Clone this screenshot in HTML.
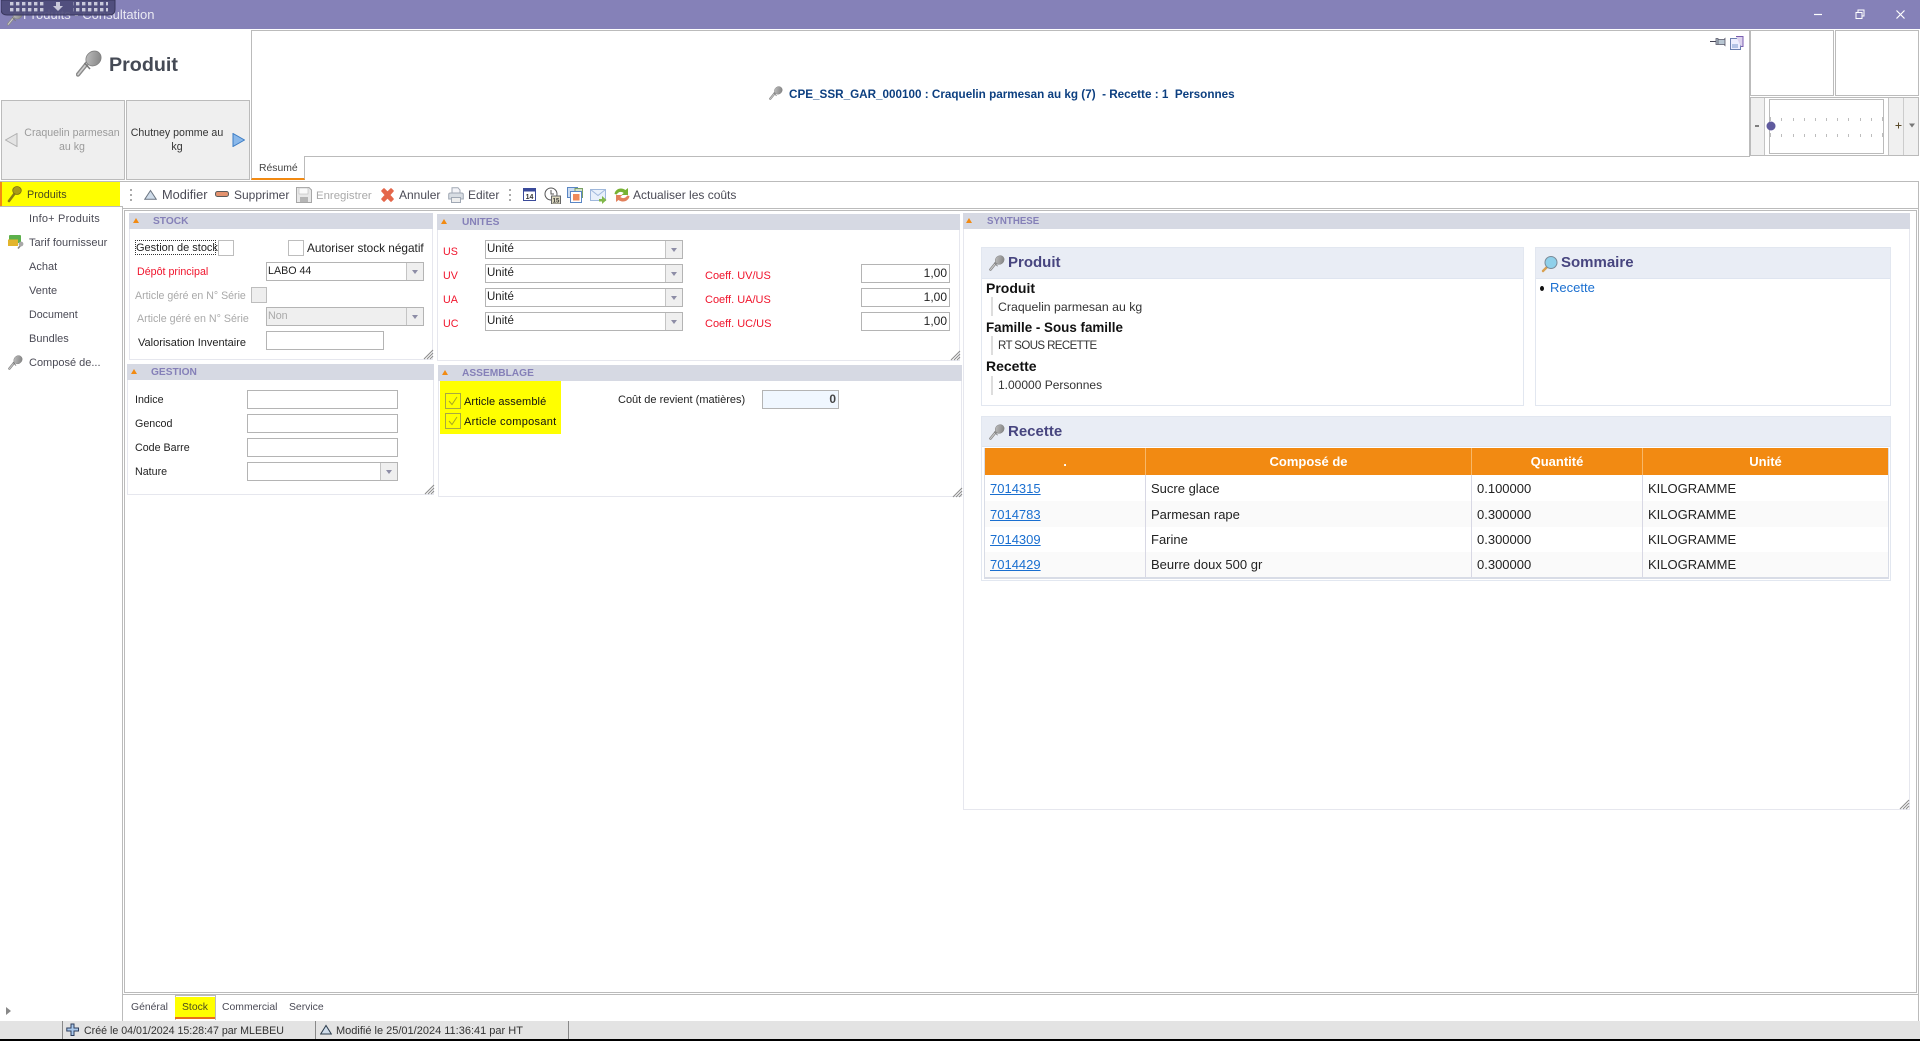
<!DOCTYPE html>
<html lang="fr"><head><meta charset="utf-8"><title>Produits - Consultation</title>
<style>
html,body{margin:0;padding:0;background:#fff}
#p{position:relative;width:1920px;height:1041px;overflow:hidden;background:#fff;font-family:"Liberation Sans",sans-serif;font-size:11px;color:#222}
#p div,#p svg,#p a{position:absolute;box-sizing:border-box}
.t{white-space:nowrap;line-height:16px;height:16px;margin-top:1px}
.m{color:#4a4a55}
.tb{font-size:12px;margin-top:0}
.z{margin-top:0}
.tab{font-size:10.4px}
.g{background:#bbb}
.h{background:#d6d9e3;height:16px}
.ht{font-weight:bold;color:#8580b8;font-size:10.2px;line-height:18px;white-space:nowrap}
.tri{width:0;height:0;border-left:3.5px solid transparent;border-right:3.5px solid transparent;border-bottom:5px solid #f28a12}
.b{border:1px solid #e6e7ee;background:#fff}
.i{border:1px solid #b4b4b4;background:#fff;height:19px;line-height:17px;padding-left:1px;white-space:nowrap;font-size:11.5px}
.r{text-align:right;padding:0 2px 0 0;font-size:12px;line-height:16px}
.c{position:absolute;right:0;top:0;bottom:0;width:17px;background:#efefef;border-left:1px solid #c4c4c4}
.c:after{content:"";position:absolute;left:5px;top:7px;border-left:3px solid transparent;border-right:3px solid transparent;border-top:4px solid #8d8da6}
.k{border:1px solid #bdbdbd;width:16px;height:16px}
.red{color:#f0142c}
.dis{color:#a9a9a9}
.lb{font-size:10.7px}
.bx{border:1px solid #e2e7f0;background:#fff}
.bh{background:#e9edf5;border-bottom:1px solid #dfe5f0;left:0;right:0;top:0}
.bt{font-weight:bold;font-size:15px;color:#47457f;line-height:18px;white-space:nowrap}
.sb{font-weight:bold;font-size:14px;color:#111;margin-top:0}
.sv{font-size:12.300px;color:#333;margin-top:0}
.vb{width:2px;background:#ddd;height:19px}
table{position:absolute;left:984px;top:448px;width:904px;border-collapse:collapse;table-layout:fixed;font-size:13px;color:#222;border-bottom:2px solid #d8dce6;border-left:1px solid #d8dce6;border-right:1px solid #d8dce6}
th{background:#f28a12;color:#fff;font-weight:bold;height:27px;padding:0;border-left:1px solid #f7b768;font-size:13px}
th:first-child,td:first-child{border-left:0}
td{padding:0 0 0 5px;border-left:1px solid #d8d8e4;white-space:nowrap}
tr.e td{background:#fafafa}
td a{color:#1a6fd0;text-decoration:underline;position:static!important}
</style></head><body><div id="p">
<svg width="0" height="0" style="left:0;top:0"><defs>
<linearGradient id="kg" x1="0" y1="0" x2="1" y2="1"><stop offset="0" stop-color="#c4c4c4"/><stop offset="1" stop-color="#7c7c7c"/></linearGradient>
<symbol id="key" viewBox="0 0 26 27"><path d="M2 24.5 L13 11" stroke="#8a8a8a" stroke-width="4.4" stroke-linecap="round" fill="none"/><path d="M2 24.5 L13 11" stroke="#cfcfcf" stroke-width="1.6" stroke-linecap="round" fill="none"/><ellipse cx="17.5" cy="8.5" rx="8" ry="7" transform="rotate(-40 17.5 8.5)" fill="url(#kg)" stroke="#808080" stroke-width=".8"/><path d="M8.5 13 L14 19" stroke="#777" stroke-width="1.5"/></symbol>
<symbol id="grip" viewBox="0 0 11 11"><path d="M1 10 L10 1 M4 10 L10 4 M7 10 L10 7" stroke="#8d8d8d" stroke-width="1.1" fill="none"/></symbol>
</defs></svg>

<!-- title bar -->
<div style="left:0;top:0;width:1920px;height:29px;background:#8581b8"></div>
<svg style="left:7px;top:9px" width="16" height="17"><use href="#key" width="16" height="17"/></svg>
<div class="t z" style="left:23px;top:7px;font-size:13px;color:#e9e9f2">Produits - Consultation</div>
<svg style="left:1px;top:0" width="115" height="16"><defs><pattern id="dp" width="6" height="6" patternUnits="userSpaceOnUse" x="9" y="2"><rect width="3.4" height="3.4" fill="#c9c9da"/></pattern></defs><path d="M0 0H114V9Q114 15 108 15H6Q0 15 0 9Z" fill="#4d4b78" fill-opacity=".92" stroke="#38365c"/><rect x="9" y="2" width="35" height="10" fill="url(#dp)"/><rect x="72" y="2" width="35" height="10" fill="url(#dp)"/><path d="M55 2h4v4h3l-5 5-5-5h3z" fill="#c9c9da"/></svg>
<svg style="left:1810px;top:6px" width="100" height="16"><path d="M4 8.500h8" stroke="#fff" stroke-width="1.200"/><path d="M46 6.500h6v6h-6z M48 6.500v-2.500h6v6h-2" stroke="#fff" stroke-width="1" fill="none"/><path d="M86.500 4.500l8 8M94.500 4.500l-8 8" stroke="#fff" stroke-width="1.200"/></svg>

<!-- logo -->
<svg style="left:76px;top:50px" width="26" height="27"><use href="#key" width="26" height="27"/></svg>
<div class="t z" style="left:109px;top:53px;font-size:19.700px;font-weight:bold;color:#454a55;line-height:24px;height:24px">Produit</div>

<!-- nav buttons -->
<div style="left:1px;top:100px;width:124px;height:80px;background:#efefef;border:1px solid #bbb"></div>
<div style="left:126px;top:100px;width:124px;height:80px;background:#efefef;border:1px solid #bbb"></div>
<div style="left:17px;top:126px;width:110px;text-align:center;line-height:14px;font-size:10.600px;color:#9b9b9b;white-space:nowrap">Craquelin parmesan<br>au kg</div>
<div style="left:122px;top:126px;width:110px;text-align:center;line-height:14px;font-size:10.600px;color:#333;white-space:nowrap">Chutney pomme au<br>kg</div>
<svg style="left:5px;top:133px" width="13" height="14"><path d="M12 .5V13.500L.5 7z" fill="#e4e4e4" stroke="#b0b0b0"/></svg>
<svg style="left:232px;top:133px" width="13" height="14"><path d="M1 .5V13.500L12.500 7z" fill="#8ab8ea" stroke="#3c7cc4"/></svg>

<!-- header -->
<div style="left:251px;top:30px;width:1499px;height:127px;border:1px solid #bbb;background:#fff"></div>
<svg style="left:769px;top:86px" width="14" height="14"><use href="#key" width="14" height="14"/></svg>
<div class="t" style="left:789px;top:86px;font-weight:bold;color:#0c3f80;font-size:11.700px">CPE_SSR_GAR_000100 : Craquelin parmesan au kg (7) &nbsp;- Recette : 1 &nbsp;Personnes</div>
<svg style="left:1710px;top:36px" width="36" height="14"><path d="M0 5.500h6" stroke="#445" stroke-width="1"/><path d="M6 2.500h2v6h-2zM8 3.500h6l1-1v7l-1-1H8z" fill="#b8c6d2" stroke="#556" stroke-width=".8"/><rect x="20.500" y="2.500" width="10" height="11" fill="#eef" stroke="#6c7fb0"/><rect x="22" y="8" width="6" height="4" fill="#b5c3e6"/><path d="M26 .5h7v10h-2" fill="#dcd2ee" stroke="#7a5eb0"/></svg>

<!-- right boxes -->
<div style="left:1750px;top:30px;width:84px;height:66px;border:1px solid #bbb"></div>
<div style="left:1835px;top:30px;width:84px;height:66px;border:1px solid #bbb"></div>
<div style="left:1750px;top:97px;width:169px;height:59px;border:1px solid #bbb;background:#f0f0f0"></div>
<div style="left:1764px;top:98px;width:125px;height:57px;background:#fff;border-left:1px solid #c4c4c4;border-right:1px solid #c4c4c4"></div>
<div style="left:1769px;top:99px;width:115px;height:55px;border:1px solid #bbb;background:#fff"></div>
<div style="left:1903px;top:98px;width:1px;height:57px;background:#ccc"></div>
<svg style="left:1754px;top:121px" width="8" height="10"><path d="M1 5h4" stroke="#333" stroke-width="1.200"/></svg>
<svg style="left:1892px;top:120px" width="24" height="10"><path d="M3.500 5.500h6M6.500 2.500v6" stroke="#5a4a2a" stroke-width="1"/><path d="M17 3.500h6l-3 4z" fill="#777"/></svg>
<svg style="left:1766px;top:116px" width="120" height="22"><g stroke="#bdbdbd" stroke-width="1"><path d="M4.500 1v4M15.500 2v3M27.500 2v3M38.500 2v3M49.500 2v3M60.500 2v3M71.500 2v3M82.500 2v3M94.500 2v3M105.500 2v3M116.500 1v4"/><path d="M4.500 17v4M15.500 18v3M27.500 18v3M38.500 18v3M49.500 18v3M60.500 18v3M71.500 18v3M82.500 18v3M94.500 18v3M105.500 18v3M116.500 17v4"/></g><ellipse cx="5" cy="10" rx="4.500" ry="4.500" fill="#5f5a9e"/></svg>

<!-- resume tab -->
<div style="left:251px;top:156px;width:54px;height:24px;background:#fff;border-right:1px solid #bbb;border-bottom:2px solid #f28a12;border-left:1px solid #bbb"></div>
<div style="left:252px;top:155px;width:52px;height:3px;background:#fff"></div>
<div class="t tab" style="left:259px;top:160px;color:#444">Résumé</div>

<!-- toolbar -->
<div class="g" style="left:0;top:181px;width:1919px;height:1px"></div>
<div class="g" style="left:1918px;top:181px;width:1px;height:840px"></div>
<div style="left:0;top:182px;width:2px;height:24px;background:#f28a12"></div>
<div style="left:2px;top:182px;width:118px;height:24px;background:#ff0"></div>
<svg style="left:7px;top:185px" width="15" height="18"><path d="M2 16L8 8" stroke="#8a7d10" stroke-width="2.600" stroke-linecap="round"/><ellipse cx="10" cy="5.500" rx="4.300" ry="4" fill="#a89a18" stroke="#7a6f10" stroke-width=".8"/></svg>
<div class="t m" style="left:27px;top:186px;color:#4a4a20;font-size:10.800px">Produits</div>
<div class="g" style="left:0;top:206px;width:122px;height:1px"></div>
<div class="g" style="left:122px;top:206px;width:1px;height:815px"></div>
<div class="g" style="left:122px;top:208px;width:1797px;height:1px"></div>
<div class="g" style="left:124px;top:210px;width:1793px;height:1px"></div>
<div class="g" style="left:124px;top:210px;width:1px;height:783px"></div>
<div class="g" style="left:1916px;top:210px;width:1px;height:783px"></div>
<div class="g" style="left:124px;top:992px;width:1793px;height:1px"></div>
<div class="g" style="left:122px;top:994px;width:1797px;height:1px"></div>

<svg style="left:130px;top:188px" width="3" height="14"><path d="M0 1h2v2H0zM0 6h2v2H0zM0 11h2v2H0z" fill="#aaa"/></svg>
<svg style="left:144px;top:189px" width="13" height="11"><path d="M.7 10.300h11.600L6.500 1.500z" fill="#cfdcea" stroke="#6a7480"/></svg>
<div class="t m tb" style="left:162px;top:187px;font-size:12.800px">Modifier</div>
<svg style="left:215px;top:191px" width="14" height="7"><rect x=".5" y=".5" width="13" height="5" rx="2" fill="#e3926e" stroke="#5a5a5a"/></svg>
<div class="t m tb" style="left:234px;top:187px">Supprimer</div>
<svg style="left:296px;top:187px" width="16" height="16"><path d="M.5.500H13L15.500 3V15.500H.5z" fill="#e8e8e8" stroke="#a6a6a6"/><rect x="3" y="1" width="9" height="6" fill="#fafafa" stroke="#bbb" stroke-width=".6"/><rect x="4" y="10" width="8" height="5" fill="#b5b5b5"/></svg>
<div class="t dis" style="left:316px;top:187px;font-size:11.400px">Enregistrer</div>
<svg style="left:380px;top:187px" width="15" height="16"><path d="M2 4L4 2 7.500 5.500 11 2l2 2-3.500 4L13 12l-2 2-3.500-3.500L4 14l-2-2 3.500-4z" fill="#e4664a" stroke="#e4664a" stroke-width="1.600" stroke-linejoin="round"/></svg>
<div class="t m tb" style="left:399px;top:187px">Annuler</div>
<svg style="left:448px;top:187px" width="16" height="16"><path d="M4 6V.7h6L12 3v3" fill="#f4f4f8" stroke="#a0a8b4"/><path d="M.7 7.500Q.7 6 2.500 6h11q1.800 0 1.800 1.500V12H.7z" fill="#d8dde3" stroke="#a0a8b4"/><rect x="3.500" y="10.500" width="9" height="5" fill="#eee" stroke="#a0a8b4"/></svg>
<div class="t m tb" style="left:468px;top:187px">Editer</div>
<svg style="left:509px;top:188px" width="3" height="14"><path d="M0 1h2v2H0zM0 6h2v2H0zM0 11h2v2H0z" fill="#aaa"/></svg>
<svg style="left:523px;top:188px" width="13" height="14"><rect x=".5" y=".5" width="12" height="12" fill="#fff" stroke="#3a4a9a"/><rect x="0" y="0" width="13" height="3.500" fill="#3a4a9a"/><text x="6.500" y="11" font-size="7" font-weight="bold" text-anchor="middle" fill="#333" font-family="Liberation Sans">14</text></svg>
<svg style="left:544px;top:187px" width="17" height="17"><circle cx="7" cy="7" r="6" fill="#fff" stroke="#555"/><path d="M7 3v4h3" stroke="#555" fill="none"/><rect x="7.500" y="9" width="9" height="8" fill="#ddd9c0" stroke="#666"/><text x="12" y="15.500" font-size="6" font-weight="bold" text-anchor="middle" fill="#333" font-family="Liberation Sans">15</text></svg>
<svg style="left:567px;top:187px" width="16" height="16"><rect x=".5" y=".5" width="10" height="10" fill="#cbdcf2" stroke="#5a86c4"/><rect x="8" y="1.500" width="7.500" height="9" fill="#d0e0c8" stroke="#7aa064"/><rect x="3.500" y="4.500" width="11" height="11" fill="#fff" stroke="#5a86c4"/><rect x="6" y="7" width="6.500" height="6.500" fill="#ef8a5a"/></svg>
<svg style="left:590px;top:189px" width="17" height="15"><rect x=".5" y=".5" width="15" height="11" fill="#e8f0fa" stroke="#9fb8dc"/><path d="M.5.500L8 6.500 15.500.5" fill="none" stroke="#9fb8dc"/><path d="M9 10h3V7l4.500 4-4.500 4v-2.500H9z" fill="#80b84a"/></svg>
<svg style="left:613px;top:186px" width="18" height="18"><path d="M1.500 8C2 3.500 7.500 .5 12.500 4L15 2v7H8.500l2.200-2C8 5 5 6 3.800 8.500z" fill="#78b234"/><path d="M16.500 10C16 14.500 10.500 17.500 5.500 14L3 16V9h6.500L7.300 11C10 13 13 12 14.200 9.500z" fill="#e2805c"/></svg>
<div class="t m tb" style="left:633px;top:187px">Actualiser les coûts</div>

<!-- left menu -->
<div class="t m" style="left:29px;top:210px;letter-spacing:.2px">Info+ Produits</div>
<svg style="left:7px;top:234px" width="17" height="16"><rect x="2" y="1" width="12" height="8" rx="1" fill="#5cb04c"/><rect x="1" y="5.500" width="10" height="6.500" fill="#e2b42c"/><path d="M11 14.500l2.500-3" stroke="#888" stroke-width="1.600"/><circle cx="14" cy="10" r="2.400" fill="#a8a8a8"/></svg>
<div class="t m" style="left:29px;top:234px">Tarif fournisseur</div>
<div class="t m" style="left:29px;top:258px">Achat</div>
<div class="t m" style="left:29px;top:282px">Vente</div>
<div class="t m" style="left:29px;top:306px;font-size:10.700px">Document</div>
<div class="t m" style="left:29px;top:330px">Bundles</div>
<svg style="left:8px;top:355px" width="15" height="15"><use href="#key" width="15" height="15"/></svg>
<div class="t m" style="left:29px;top:354px">Composé de...</div>

<!-- STOCK -->
<div class="b" style="left:129px;top:213px;width:304px;height:147px"></div>
<div class="h" style="left:129px;top:213px;width:304px"></div>
<div class="tri" style="left:133px;top:218px"></div>
<div class="ht" style="left:153px;top:213px">STOCK</div>
<div class="t z" style="left:135px;top:240px;width:81px;height:15px;line-height:14px;border:1px dotted #333">Gestion de stock</div>
<div class="k" style="left:218px;top:240px"></div>
<div class="k" style="left:288px;top:240px"></div>
<div class="t z" style="left:307px;top:240px;font-size:11.800px">Autoriser stock négatif</div>
<div class="t red lb" style="left:137px;top:263px">Dépôt principal</div>
<div class="i" style="left:266px;top:262px;width:158px;font-size:10.700px">LABO 44<div class="c"></div></div>
<div class="t dis" style="left:135px;top:287px;font-size:10.600px">Article géré en N° Série</div>
<div class="k" style="left:251px;top:287px;background:#eee"></div>
<div class="t dis" style="left:137px;top:310px;font-size:10.700px">Article géré en N° Série</div>
<div class="i dis" style="left:266px;top:307px;width:158px;background:#efefef;font-size:10.700px">Non<div class="c"></div></div>
<div class="t" style="left:138px;top:334px">Valorisation Inventaire</div>
<div class="i" style="left:266px;top:331px;width:118px"></div>
<svg style="left:423px;top:349px" width="11" height="11"><use href="#grip" width="11" height="11"/></svg>

<!-- GESTION -->
<div class="b" style="left:127px;top:364px;width:307px;height:131px"></div>
<div class="h" style="left:127px;top:364px;width:307px"></div>
<div class="tri" style="left:131px;top:369px"></div>
<div class="ht" style="left:151px;top:364px">GESTION</div>
<div class="t lb" style="left:135px;top:391px">Indice</div><div class="i" style="left:247px;top:390px;width:151px"></div>
<div class="t lb" style="left:135px;top:415px">Gencod</div><div class="i" style="left:247px;top:414px;width:151px"></div>
<div class="t lb" style="left:135px;top:439px">Code Barre</div><div class="i" style="left:247px;top:438px;width:151px"></div>
<div class="t lb" style="left:135px;top:463px">Nature</div><div class="i" style="left:247px;top:462px;width:151px"><div class="c"></div></div>
<svg style="left:424px;top:484px" width="11" height="11"><use href="#grip" width="11" height="11"/></svg>

<!-- UNITES -->
<div class="b" style="left:437px;top:214px;width:523px;height:147px"></div>
<div class="h" style="left:437px;top:214px;width:523px"></div>
<div class="tri" style="left:441px;top:219px"></div>
<div class="ht" style="left:462px;top:214px">UNITES</div>
<div class="t red lb" style="left:443px;top:243px">US</div><div class="i" style="left:485px;top:240px;width:198px">Unité<div class="c"></div></div>
<div class="t red lb" style="left:443px;top:267px">UV</div><div class="i" style="left:485px;top:264px;width:198px">Unité<div class="c"></div></div>
<div class="t red lb" style="left:443px;top:291px">UA</div><div class="i" style="left:485px;top:288px;width:198px">Unité<div class="c"></div></div>
<div class="t red lb" style="left:443px;top:315px">UC</div><div class="i" style="left:485px;top:312px;width:198px">Unité<div class="c"></div></div>
<div class="t red" style="left:705px;top:267px">Coeff. UV/US</div><div class="i r" style="left:861px;top:264px;width:89px">1,00</div>
<div class="t red" style="left:705px;top:291px">Coeff. UA/US</div><div class="i r" style="left:861px;top:288px;width:89px">1,00</div>
<div class="t red" style="left:705px;top:315px">Coeff. UC/US</div><div class="i r" style="left:861px;top:312px;width:89px">1,00</div>
<svg style="left:950px;top:350px" width="11" height="11"><use href="#grip" width="11" height="11"/></svg>

<!-- ASSEMBLAGE -->
<div class="b" style="left:438px;top:365px;width:524px;height:132px"></div>
<div class="h" style="left:438px;top:365px;width:524px"></div>
<div class="tri" style="left:442px;top:370px"></div>
<div class="ht" style="left:462px;top:365px">ASSEMBLAGE</div>
<div style="left:440px;top:381px;width:121px;height:53px;background:#ff0"></div>
<div class="k" style="left:445px;top:393px;border-color:#a8a840"></div>
<svg style="left:447px;top:395px" width="12" height="12"><path d="M2 6l3 3.500L10 2" stroke="#a8a820" fill="none"/></svg>
<div class="t" style="left:464px;top:393px;color:#111;letter-spacing:.1px">Article assemblé</div>
<div class="k" style="left:445px;top:413px;border-color:#a8a840"></div>
<svg style="left:447px;top:415px" width="12" height="12"><path d="M2 6l3 3.500L10 2" stroke="#a8a820" fill="none"/></svg>
<div class="t" style="left:464px;top:413px;color:#111;letter-spacing:.3px">Article composant</div>
<div class="t" style="left:618px;top:391px">Coût de revient (matières)</div>
<div class="i r" style="left:762px;top:390px;width:77px;background:#f0f7ff;font-weight:bold;color:#444">0</div>
<svg style="left:952px;top:487px" width="11" height="11"><use href="#grip" width="11" height="11"/></svg>

<!-- SYNTHESE -->
<div class="b" style="left:963px;top:213px;width:947px;height:597px"></div>
<div class="h" style="left:963px;top:213px;width:947px"></div>
<div class="tri" style="left:966px;top:218px"></div>
<div class="ht" style="left:987px;top:213px;font-size:9.700px">SYNTHESE</div>
<svg style="left:1899px;top:799px" width="11" height="11"><use href="#grip" width="11" height="11"/></svg>

<div class="bx" style="left:981px;top:247px;width:543px;height:159px"><div class="bh" style="height:31px"></div></div>
<svg style="left:989px;top:255px" width="16" height="16"><use href="#key" width="16" height="16"/></svg>
<div class="bt" style="left:1008px;top:254px">Produit</div>
<div class="t sb" style="left:986px;top:280px">Produit</div>
<div class="vb" style="left:991px;top:297px"></div>
<div class="t sv" style="left:998px;top:299px">Craquelin parmesan au kg</div>
<div class="t sb" style="left:986px;top:320px;font-size:13.400px">Famille - Sous famille</div>
<div class="vb" style="left:991px;top:336px"></div>
<div class="t z" style="left:998px;top:338px;font-size:11.500px;letter-spacing:-.6px;color:#333">RT SOUS RECETTE</div>
<div class="t sb" style="left:986px;top:358px">Recette</div>
<div class="vb" style="left:991px;top:376px"></div>
<div class="t z" style="left:998px;top:377px;font-size:12px;color:#333">1.00000 Personnes</div>

<div class="bx" style="left:1535px;top:247px;width:356px;height:159px"><div class="bh" style="height:31px"></div></div>
<svg style="left:1541px;top:255px" width="17" height="18"><path d="M2 16l4-4" stroke="#d8a050" stroke-width="2.400" stroke-linecap="round"/><circle cx="10" cy="7.500" r="6" fill="#8fd0ea" stroke="#7a8a98"/></svg>
<div class="bt" style="left:1561px;top:254px">Sommaire</div>
<div style="left:1540px;top:286px;width:4px;height:5px;border-radius:50%;background:#111"></div>
<div class="t z" style="left:1550px;top:280px;font-size:13px;color:#1a6fd0">Recette</div>

<div class="bx" style="left:981px;top:416px;width:910px;height:165px"><div class="bh" style="height:30px"></div></div>
<svg style="left:989px;top:424px" width="16" height="16"><use href="#key" width="16" height="16"/></svg>
<div class="bt" style="left:1008px;top:423px">Recette</div>
<table>
<colgroup><col style="width:161px"><col style="width:326px"><col style="width:171px"><col style="width:246px"></colgroup>
<tr><th>.</th><th>Composé de</th><th>Quantité</th><th>Unité</th></tr>
<tr style="height:26px"><td><a>7014315</a></td><td>Sucre glace</td><td>0.100000</td><td>KILOGRAMME</td></tr>
<tr class="e" style="height:26px"><td><a>7014783</a></td><td>Parmesan rape</td><td>0.300000</td><td>KILOGRAMME</td></tr>
<tr style="height:25px"><td><a>7014309</a></td><td>Farine</td><td>0.300000</td><td>KILOGRAMME</td></tr>
<tr class="e" style="height:26px"><td><a>7014429</a></td><td>Beurre doux 500 gr</td><td>0.300000</td><td>KILOGRAMME</td></tr>
</table>

<!-- bottom tabs -->
<svg style="left:6px;top:1007px" width="6" height="8"><path d="M0 0l5 4-5 4z" fill="#888"/></svg>
<div class="t m tab" style="left:131px;top:999px">Général</div>
<div style="left:175px;top:995px;width:41px;height:25px;background:#fff;border:1px solid #bbb;border-bottom:0"></div>
<div style="left:175px;top:997px;width:40px;height:20px;background:#ff0"></div>
<div style="left:175px;top:1017px;width:40px;height:2px;background:#e8701a"></div>
<div class="t m tab" style="left:182px;top:999px;color:#4a4a20">Stock</div>
<div class="t m tab" style="left:222px;top:999px">Commercial</div>
<div class="t m tab" style="left:289px;top:999px">Service</div>

<!-- status bar -->
<div style="left:0;top:1021px;width:1920px;height:18px;background:#e3e3e3"></div>
<div style="left:0;top:1039px;width:1920px;height:2px;background:#000"></div>
<div style="left:62px;top:1021px;width:1px;height:18px;background:#888"></div>
<div style="left:315px;top:1021px;width:1px;height:18px;background:#888"></div>
<div style="left:568px;top:1021px;width:1px;height:18px;background:#888"></div>
<svg style="left:66px;top:1023px" width="14" height="14"><path d="M5 1h3v4h4.500v3H8v4.500H5V8H.8V5H5z" fill="#a9c8ec" stroke="#2c3c5c"/></svg>
<div class="t" style="left:84px;top:1022px;color:#333;font-size:10.650px">Créé le 04/01/2024 15:28:47 par MLEBEU</div>
<svg style="left:320px;top:1024px" width="12" height="11"><path d="M.7 10h10.600L6 1.500z" fill="#cfdcea" stroke="#2c3c4c"/></svg>
<div class="t" style="left:336px;top:1022px;color:#333;font-size:11px">Modifié le 25/01/2024 11:36:41 par HT</div>
</div></body></html>
